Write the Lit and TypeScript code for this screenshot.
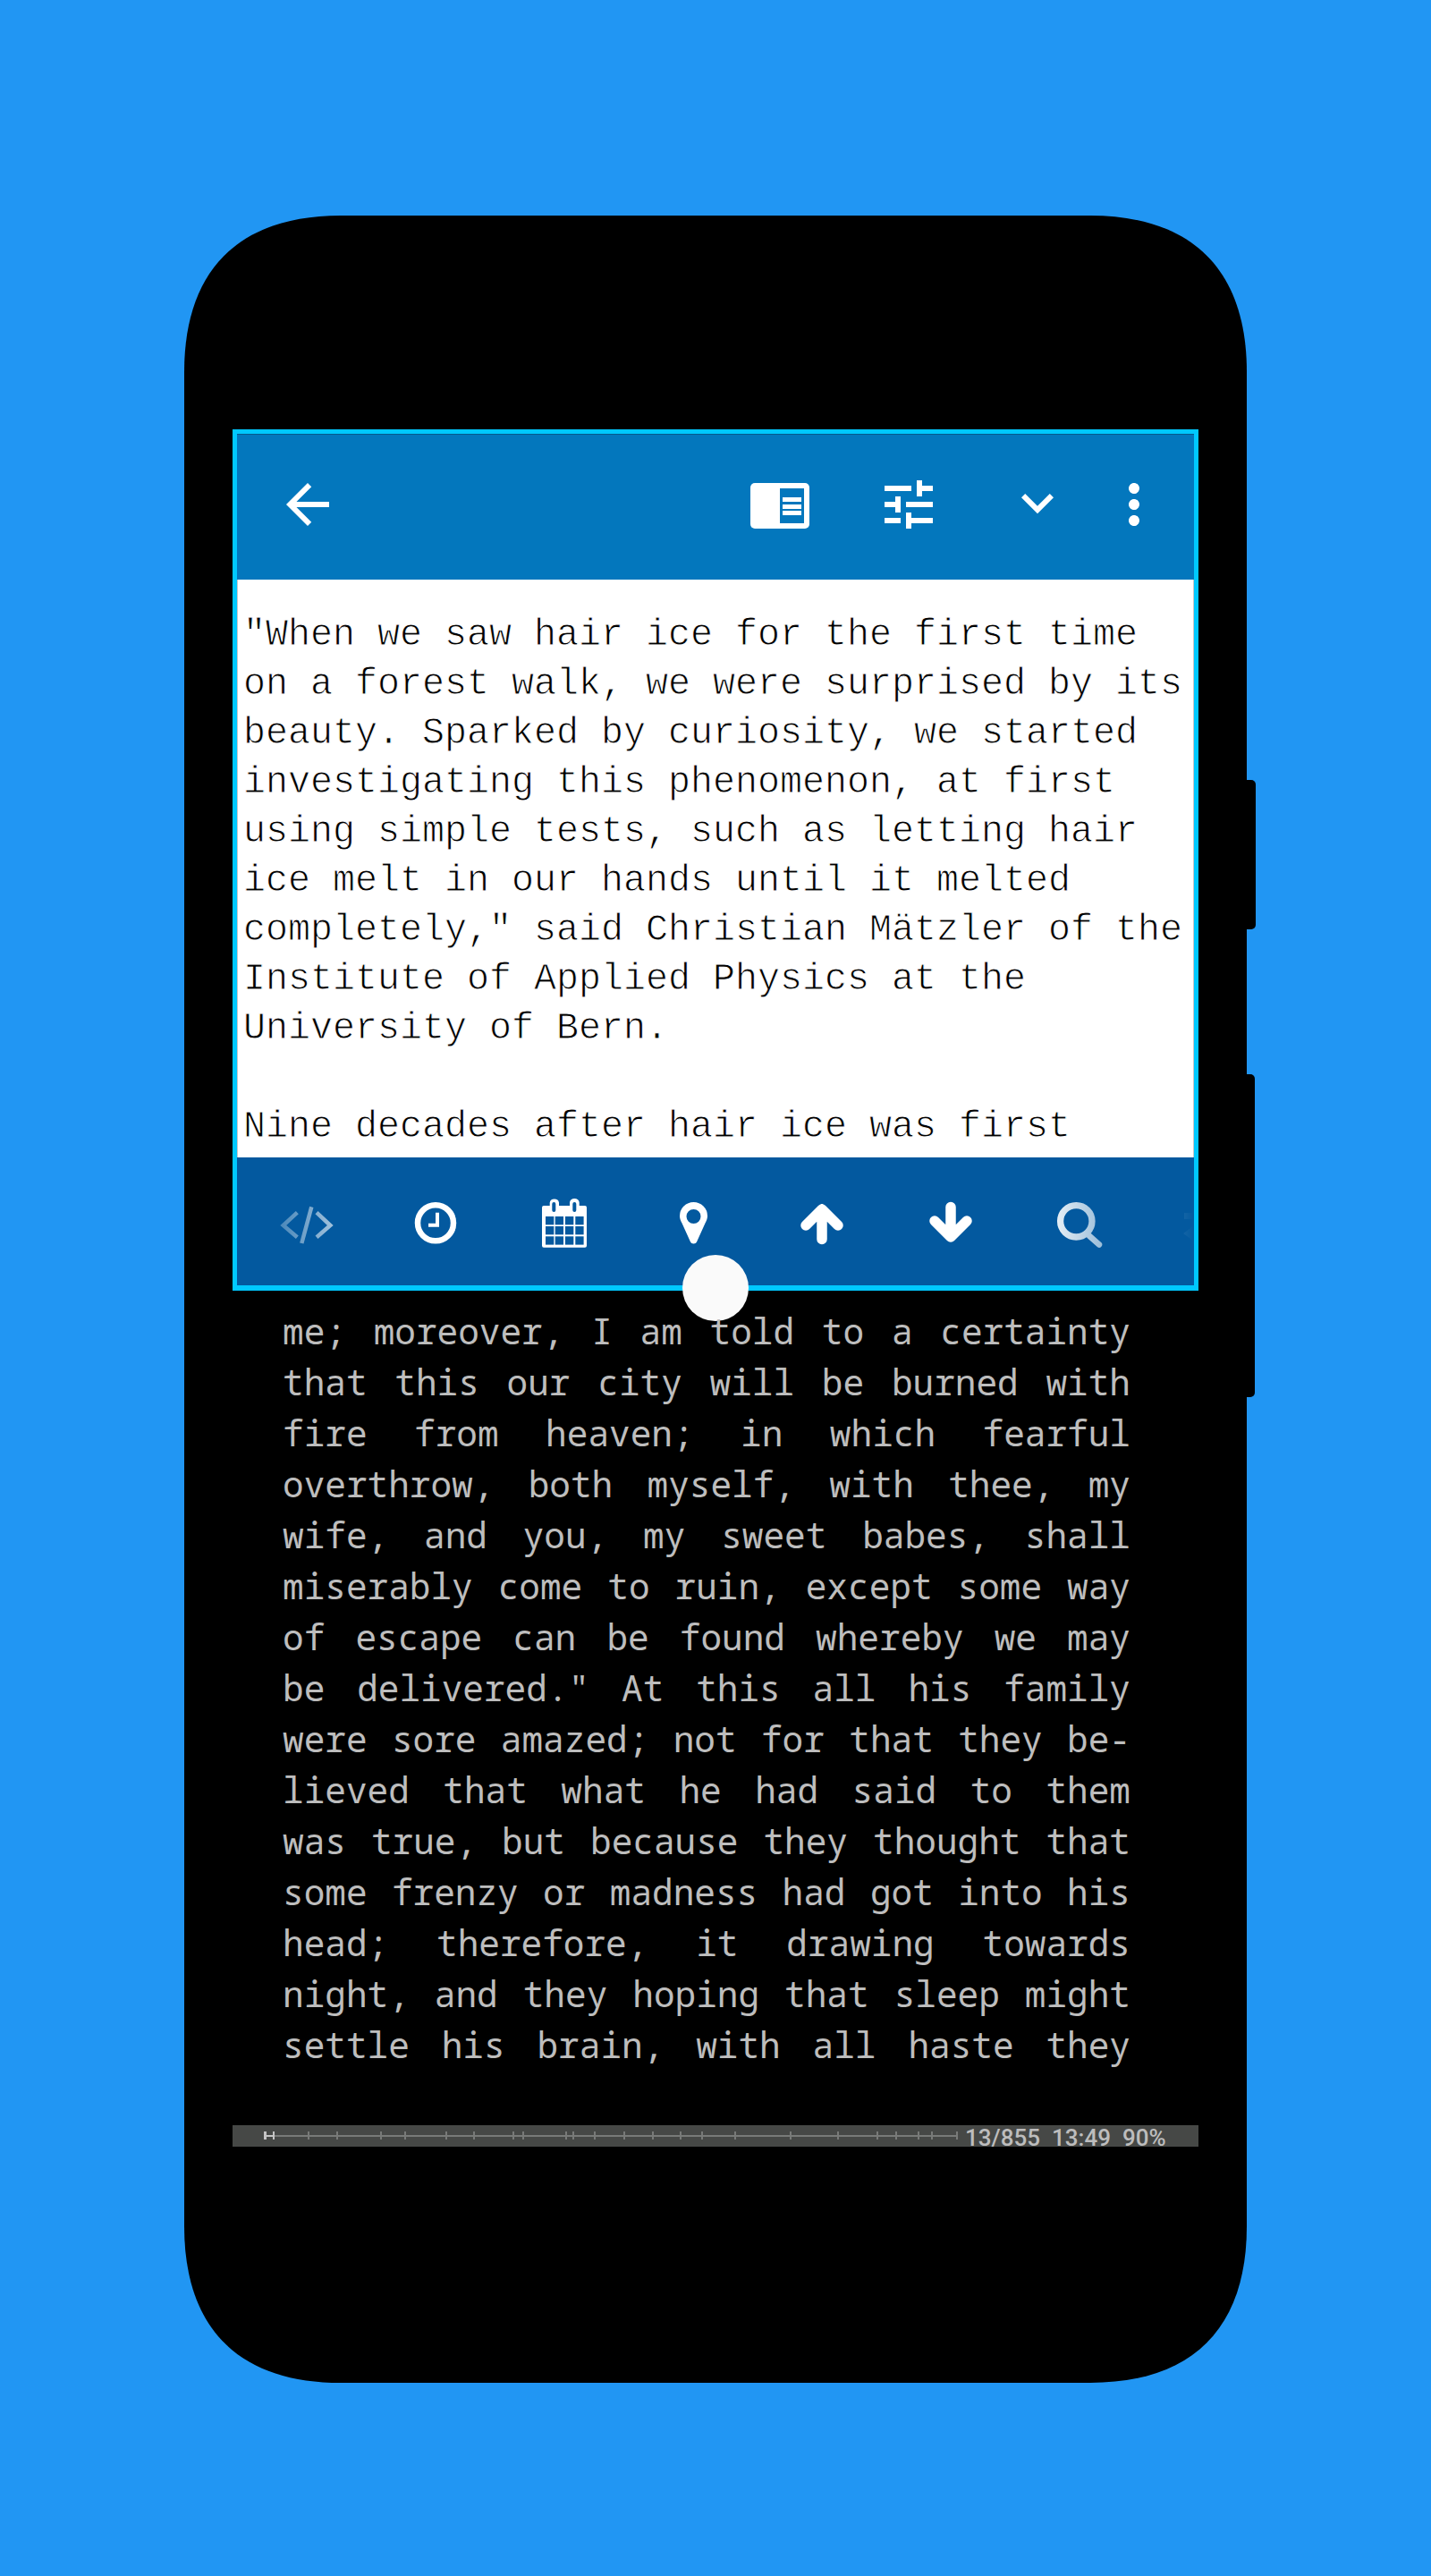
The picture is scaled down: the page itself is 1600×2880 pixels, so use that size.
import { LitElement, html, css, svg } from "lit";
import { customElement } from "lit/decorators.js";

const PANE_LINES = [
  '"When we saw hair ice for the first time',
  "on a forest walk, we were surprised by its",
  "beauty. Sparked by curiosity, we started",
  "investigating this phenomenon, at first",
  "using simple tests, such as letting hair",
  "ice melt in our hands until it melted",
  'completely," said Christian Mätzler of the',
  "Institute of Applied Physics at the",
  "University of Bern.",
  " ",
  "Nine decades after hair ice was first",
];

const BOOK_LINES = [
  "me; moreover, I am told to a certainty",
  "that this our city will be burned with",
  "fire from heaven; in which fearful",
  "overthrow, both myself, with thee, my",
  "wife, and you, my sweet babes, shall",
  "miserably come to ruin, except some way",
  "of escape can be found whereby we may",
  'be delivered." At this all his family',
  "were sore amazed; not for that they be-",
  "lieved that what he had said to them",
  "was true, but because they thought that",
  "some frenzy or madness had got into his",
  "head; therefore, it drawing towards",
  "night, and they hoping that sleep might",
  "settle his brain, with all haste they",
];

const TICKS = [84, 116, 165, 192, 238, 269, 313, 324, 372, 380, 404, 437, 469, 500, 524, 561, 623, 676, 720, 741, 766, 781, 809];

const CAL_X = [51, 61.7, 73, 84.3];
const CAL_Y = [66, 77, 88.3];

@customElement("app-root")
export class AppRoot extends LitElement {
  static styles = css`
    :host {
      display: block;
      width: 1600px;
      height: 2880px;
      background: #2196f3;
      overflow: hidden;
    }
    .page {
      padding: 241px 0 0 206px;
    }
    .phone {
      position: relative;
      box-sizing: border-box;
      width: 1188px;
      height: 2423px;
      padding: 239px 54px 0;
    }
    .shell {
      position: absolute;
      inset: 0;
      background: #000;
      clip-path: path("M0 175C0 61 61 0 175 0H1013C1127 0 1188 61 1188 175V2248C1188 2362 1127 2423 1013 2423H175C61 2423 0 2362 0 2248Z");
    }
    .side {
      position: absolute;
      left: 100%;
      background: #000;
      border-radius: 0 5px 5px 0;
    }
    .power {
      top: 631px;
      width: 10px;
      height: 167px;
    }
    .volume {
      top: 960px;
      width: 9px;
      height: 361px;
    }
    .frame {
      position: relative;
      box-sizing: border-box;
      height: 963px;
      border: 5px solid #00c8ff;
      border-bottom-width: 6px;
      display: flex;
      flex-direction: column;
      background: #fff;
    }
    .toolbar {
      box-sizing: border-box;
      height: 163px;
      flex: none;
      display: flex;
      align-items: flex-start;
      padding: 42px 31px 0 43px;
      background: #0377bd;
      border-top: 1px solid #045a8c;
    }
    .toolbar svg {
      width: 72px;
      height: 72px;
      flex: none;
      fill: #fff;
    }
    .spacer {
      flex: 1;
    }
    .g72 {
      margin-left: 72px;
    }
    .g36 {
      margin-left: 36px;
    }
    .pane {
      flex: 1;
      min-height: 0;
      overflow: hidden;
      box-sizing: border-box;
      padding: 35px 0 0 6px;
      background: #fff;
      border-left: 1px solid #c8c8c8;
      border-right: 1px solid #c8c8c8;
      font-family: "Liberation Mono", monospace;
      font-size: 41.67px;
      line-height: 55px;
      color: #000;
      -webkit-text-stroke: 0.9px #fff;
      white-space: pre;
    }
    .bar {
      height: 143px;
      flex: none;
      background: #03599f;
    }
    .strip {
      display: flex;
      height: 143px;
      padding-left: 6px;
      overflow: hidden;
      -webkit-mask-image: linear-gradient(to right, transparent 0, #000 170px, #000 900px, transparent 100%);
      mask-image: linear-gradient(to right, transparent 0, #000 170px, #000 900px, transparent 100%);
    }
    .strip svg {
      width: 144px;
      height: 143px;
      flex: none;
    }
    .s {
      fill: none;
      stroke: #fff;
    }
    .f {
      fill: #fff;
    }
    .cell {
      fill: #03599f;
    }
    .handle {
      position: absolute;
      left: 50%;
      bottom: -40px;
      width: 74px;
      height: 74px;
      margin-left: -37px;
      border-radius: 50%;
      background: #fafafa;
    }
    .book {
      position: relative;
      margin: 17px 0 0 56px;
      width: 948px;
      height: 855px;
      font-family: "Noto Sans Mono", "DejaVu Sans Mono", monospace;
      font-size: 39.4px;
      line-height: 57px;
      color: #bdbdbd;
    }
    .book div {
      text-align: justify;
      text-align-last: justify;
      white-space: normal;
    }
    .status {
      position: relative;
      margin-top: 61px;
      height: 24px;
      display: flex;
      align-items: center;
      background: #464846;
    }
    .ruler {
      width: 820px;
      height: 24px;
      flex: none;
    }
    .stats {
      display: flex;
      gap: 13px;
      margin-left: -1px;
      font-family: Roboto, sans-serif;
      font-weight: 500;
      font-size: 26px;
      line-height: 28px;
      height: 24px;
      color: #bdbdbd;
      white-space: nowrap;
    }
  `;

  private tune() {
    return html`<svg class="g72" viewBox="0 0 24 24"><path d="M3 17v2h6v-2H3zM3 5v2h10V5H3zm10 16v-2h8v-2h-8v-2h-2v6h2zM7 9v2H3v2h4v2h2V9H7zm14 4v-2H11v2h10zm-6-4h2V7h4V5h-4V3h-2v6z"></path></svg>`;
  }

  private ruler() {
    return html`<svg class="ruler" viewBox="0 0 820 24">
      <rect x="38" y="11" width="771" height="2" fill="#787a78"></rect>
      ${TICKS.map((x) => svg`<rect x=${x} y="7" width="2" height="9" fill="#787a78"></rect>`)}
      <rect x="35" y="7" width="3" height="9" fill="#c4c4c4"></rect>
      <rect x="38" y="11" width="7" height="2" fill="#c4c4c4"></rect>
      <rect x="45" y="7" width="2" height="9" fill="#c4c4c4"></rect>
    </svg>`;
  }

  private strip() {
    return html`<div class="strip">
      <svg viewBox="0 0 144 143">
        <path class="s" stroke-width="4.5" d="M61.3 61.7 45.7 76l15.6 13.3M77.3 55.3 66.3 96M83 61.7 98.3 76 83 89.3"></path>
      </svg>
      <svg viewBox="0 0 144 143">
        <circle class="s" cx="72" cy="73.3" r="20" stroke-width="6.5"></circle>
        <path class="f" d="M72 61.7h4v16H64v-4h8z"></path>
      </svg>
      <svg viewBox="0 0 144 143">
        <path class="f" d="M49 54h6.7v-3.5a5.2 4.5 0 0 1 10.3 0V54h12v-3.5a5.3 4.5 0 0 1 10.7 0V54H95a2 2 0 0 1 2 2v42.7a2 2 0 0 1-2 2H49a2 2 0 0 1-2-2V56a2 2 0 0 1 2-2z"></path>
        <rect class="cell" x="58.3" y="50" width="4" height="11" rx="2"></rect>
        <rect class="cell" x="81.3" y="50" width="4" height="11" rx="2"></rect>
        ${CAL_Y.map((y) => CAL_X.map((x) => svg`<rect class="cell" x=${x} y=${y} width="9.3" height="9.3"></rect>`))}
      </svg>
      <svg viewBox="0 0 144 143">
        <path class="f" fill-rule="evenodd" d="M72.5 50a15.5 15.5 0 0 1 15.5 15.5c0 3-1 5-2.5 8L76 94.5c-1 2.5-6 2.5-7 0L59.5 73.5c-1.5-3-2.5-5-2.5-8A15.5 15.5 0 0 1 72.5 50zM72.5 58a8 8 0 1 0 0 16 8 8 0 1 0 0-16z"></path>
      </svg>
      <svg viewBox="0 0 144 143">
        <path class="s" stroke-width="11.5" stroke-linecap="round" stroke-linejoin="round" d="M54 76 72 58l18 18M72 58v33.5"></path>
      </svg>
      <svg viewBox="0 0 144 143">
        <path class="s" stroke-width="11.5" stroke-linecap="round" stroke-linejoin="round" d="M54 71l18 18 18-18M72 89V55.5"></path>
      </svg>
      <svg viewBox="0 0 144 143">
        <circle class="s" cx="68.3" cy="71.3" r="17.7" stroke-width="7.3"></circle>
        <path class="s" stroke-width="6.5" stroke-linecap="round" d="M83 87.7 94 97.5"></path>
      </svg>
      <svg viewBox="0 0 144 143">
        <rect class="f" x="45" y="62" width="60" height="7"></rect>
        <path class="f" d="M44 85 56 76v18z"></path>
      </svg>
    </div>`;
  }

  render() {
    return html`<div class="page">
      <div class="phone">
        <div class="shell"></div>
        <div class="side power"></div>
        <div class="side volume"></div>
        <div class="frame">
          <div class="toolbar">
            <svg viewBox="0 0 24 24"><path d="M20 11H7.83l5.59-5.59L12 4l-8 8 8 8 1.41-1.41L7.83 13H20v-2z"></path></svg>
            <div class="spacer"></div>
            <svg viewBox="0 0 72 72">
              <rect x="3" y="12" width="66" height="51" rx="5"></rect>
              <rect x="36" y="18" width="27" height="39" fill="#0377bd"></rect>
              <rect x="39" y="28" width="21" height="5"></rect>
              <rect x="39" y="36" width="21" height="5"></rect>
              <rect x="39" y="43" width="21" height="5"></rect>
            </svg>
            ${this.tune()}
            <svg class="g72" viewBox="0 0.6 24 24"><path d="M16.59 8.59 12 13.17 7.41 8.59 6 10l6 6 6-6z"></path></svg>
            <svg class="g36" viewBox="0 0 24 24"><path d="M12 8c1.1 0 2-.9 2-2s-.9-2-2-2-2 .9-2 2 .9 2 2 2zm0 2c-1.1 0-2 .9-2 2s.9 2 2 2 2-.9 2-2-.9-2-2-2zm0 6c-1.1 0-2 .9-2 2s.9 2 2 2 2-.9 2-2-.9-2-2-2z"></path></svg>
          </div>
          <div class="pane">${PANE_LINES.map((l) => html`<div>${l}</div>`)}</div>
          <div class="bar">${this.strip()}</div>
          <div class="handle"></div>
        </div>
        <div class="book">${BOOK_LINES.map((l) => html`<div>${l}</div>`)}</div>
        <div class="status">
          ${this.ruler()}
          <div class="stats"><span>13/855</span><span>13:49</span><span>90%</span></div>
        </div>
      </div>
    </div>`;
  }
}
